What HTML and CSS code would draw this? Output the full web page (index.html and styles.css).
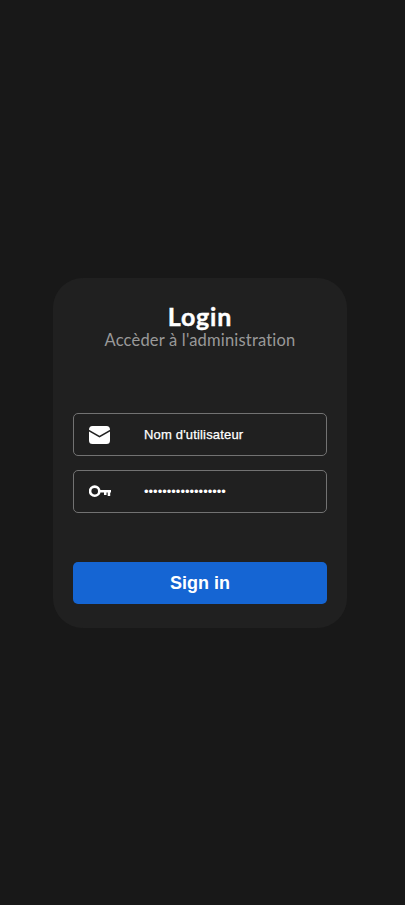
FILE: index.html
```html
<!DOCTYPE html>
<html lang="fr">
<head>
<meta charset="utf-8">
<meta name="viewport" content="width=device-width, initial-scale=1">
<title>Login</title>
<link rel="stylesheet" href="styles.css">
</head>
<body>
<main class="card">
  <header class="heading">
    <h1 class="title">Login</h1>
    <p class="subtitle">Accèder à l'administration</p>
  </header>
  <div class="fields">
    <div class="field">
      <svg class="icon" viewBox="0 0 22 18"><path fill="#fff" d="M3.5 0h14q3.500 0 3.500 3.800L10.500 9.700 0 3.800Q0 0 3.500 0zM0 5.600l10.500 6L21 5.600v8.900q0 3.500-3.500 3.500h-14Q0 18 0 14.500z"/></svg>
      <span class="value name">Nom d'utilisateur</span>
    </div>
    <div class="field">
      <svg class="icon" viewBox="0 0 22 18"><circle cx="5.700" cy="8.200" r="4.600" fill="none" stroke="#fff" stroke-width="2.600"/><path fill="#fff" d="M10.500 7H22v2.500h-.8v3.600h-2.500V9.500h-1.200v2.600h-2.500V9.500h-4.500z"/></svg>
      <span class="value dots">••••••••••••••••••</span>
    </div>
  </div>
  <button class="submit" type="button">Sign in</button>
</main>
</body>
</html>
```
FILE: styles.css
```css
* { box-sizing: border-box; }
body {
  margin: 0;
  min-height: 100vh;
  padding: 278px 58px 0 53px;
  background: #181818;
  color: #fff;
  font-family: "Liberation Sans", Arial, sans-serif;
}
.card {
  width: 294px;
  height: 350px;
  padding: 24px 20px;
  border-radius: 30px;
  background: #202020;
}
.heading {
  height: 111px;
  text-align: center;
  font-family: Lato, sans-serif;
  font-variant-ligatures: none;
}
.title {
  margin: 0;
  font-size: 25px;
  line-height: 29px;
  font-weight: 700;
  letter-spacing: 0.8px;
  -webkit-text-stroke: 0.4px #fff;
}
.subtitle {
  margin: 0;
  font-size: 16.5px;
  line-height: 19px;
  letter-spacing: 0.19px;
  color: #999;
  white-space: nowrap;
}
.fields { display: flex; flex-direction: column; gap: 14px; }
.field {
  display: flex;
  align-items: center;
  height: 43px;
  padding-left: 15px;
  border: 1px solid #727272;
  border-radius: 5px;
}
.icon { width: 22px; height: 18px; margin-right: 33px; }
.value { font-size: 13px; line-height: 16px; white-space: nowrap; }
.name { letter-spacing: 0.17px; -webkit-text-stroke: 0.25px #fff; }
.submit {
  display: block;
  width: 100%;
  height: 42px;
  margin-top: 49px;
  padding: 0;
  border: 0;
  border-radius: 5px;
  background: #1565d3;
  color: #fff;
  font: 700 18px "Liberation Sans", Arial, sans-serif;
}
```
